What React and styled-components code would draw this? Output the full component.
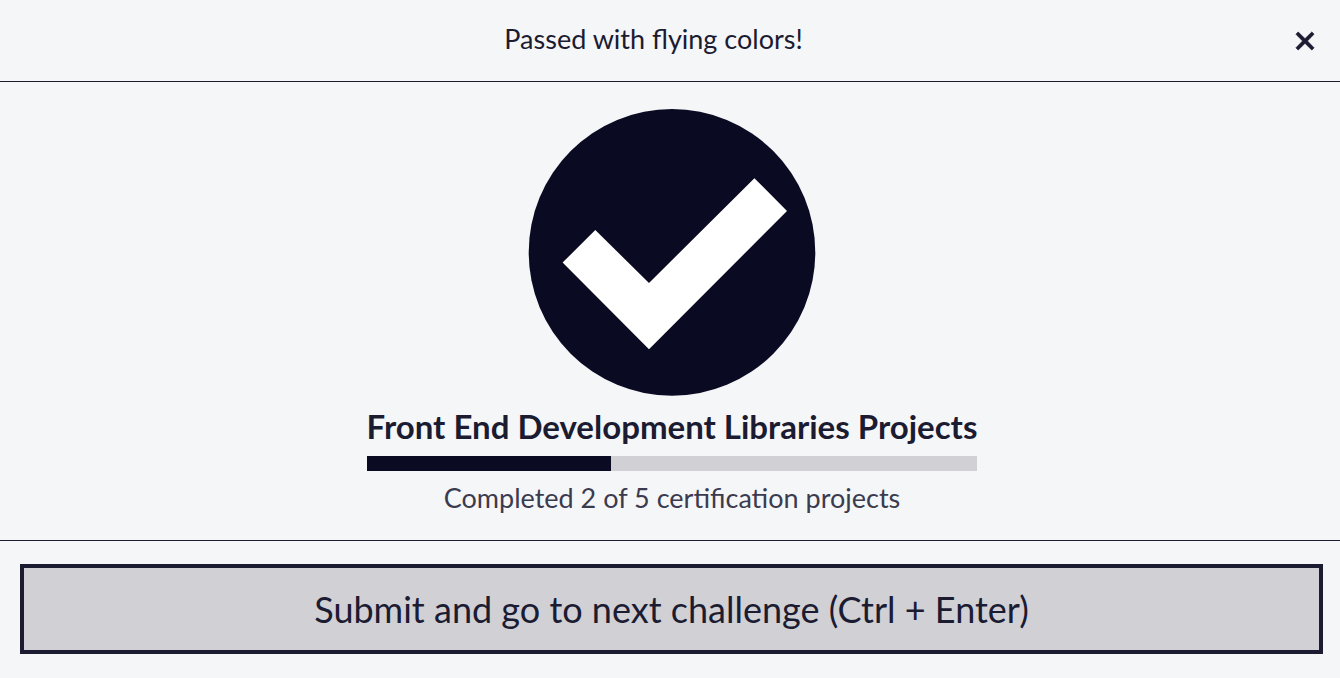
import React from 'react';
import styled, { createGlobalStyle } from 'styled-components';

const GlobalStyle = createGlobalStyle`
  *, *::before, *::after { box-sizing: border-box; }
  body {
    margin: 0;
    background: #f5f6f7;
    color: #1b1b32;
    font-family: Lato, "Open Sans", sans-serif;
    font-size: 27px;
    line-height: 40px;
  }
`;

const Modal = styled.main`
  display: flex;
  flex-direction: column;
`;

const Header = styled.header`
  display: flex;
  align-items: flex-start;
  padding: 19px 20px 20px;
  border-bottom: 1px solid #1b1b32;
`;

const Title = styled.h1`
  flex: 1;
  margin: 0;
  padding-right: 3px;
  font-size: 27px;
  font-weight: 400;
  line-height: 40px;
  text-align: center;
`;

const CloseButton = styled.button`
  display: flex;
  align-items: center;
  justify-content: center;
  width: 30px;
  height: 42px;
  margin: 1px 0 -1px;
  padding: 0;
  border: 0;
  background: transparent;
  color: #1b1b32;
  cursor: pointer;
`;

const Body = styled.section`
  display: flex;
  flex-direction: column;
  align-items: center;
  padding: 27px 16px 22px 20px;
  border-bottom: 1px solid #1b1b32;
`;

const Progress = styled.div`
  display: flex;
  flex-direction: column;
  padding-top: 8px;
  text-align: center;
`;

const BlockTitle = styled.h2`
  margin: 0 0 9px;
  font-size: 33px;
  font-weight: 700;
  line-height: 42px;
`;

const Track = styled.div`
  height: 15px;
  background: #d0d0d5;
`;

const Fill = styled.div`
  height: 100%;
  background: #0a0a23;
`;

const Caption = styled.p`
  margin: 7px 0 0;
  color: #3b3b4f;
`;

const Footer = styled.footer`
  display: flex;
  padding: 23px 17px 24px 20px;
`;

const SubmitButton = styled.button`
  flex: 1;
  height: 90px;
  padding: 0;
  border: 4px solid #1b1b32;
  background: #d0d0d5;
  color: #1b1b32;
  font-family: inherit;
  font-size: 36px;
  cursor: pointer;
`;

const completed = 2;
const total = 5;

export default function App() {
  return (
    <>
      <GlobalStyle />
      <Modal>
        <Header>
          <Title>Passed with flying colors!</Title>
          <CloseButton type="button" aria-label="Close">
            <svg width="20" height="20" viewBox="0 0 20 20" aria-hidden="true">
              <path d="M1 3.2L3.2 1L10 7.7L16.8 1L19 3.2L12.4 10L19 16.8L16.8 19L10 12.3L3.2 19L1 16.8L7.6 10Z" fill="currentColor" stroke="currentColor" strokeWidth="0.8" strokeLinejoin="round" />
            </svg>
          </CloseButton>
        </Header>
        <Body>
          <svg width="288" height="288" viewBox="0 0 288 288" aria-hidden="true">
            <circle cx="144" cy="143.4" r="143.3" fill="#0a0a23" />
            <path d="M34.6 153.6L67.3 121L121 174L226.4 69.2L259 102L121 240.2Z" fill="#fff" />
          </svg>
          <Progress>
            <BlockTitle>Front End Development Libraries Projects</BlockTitle>
            <Track role="progressbar" aria-label="Certification projects completed" aria-valuemin={0} aria-valuemax={total} aria-valuenow={completed}>
              <Fill style={{ width: `${(completed / total) * 100}%` }} />
            </Track>
            <Caption>Completed {completed} of {total} certification projects</Caption>
          </Progress>
        </Body>
        <Footer>
          <SubmitButton type="button">Submit and go to next challenge (Ctrl + Enter)</SubmitButton>
        </Footer>
      </Modal>
    </>
  );
}
